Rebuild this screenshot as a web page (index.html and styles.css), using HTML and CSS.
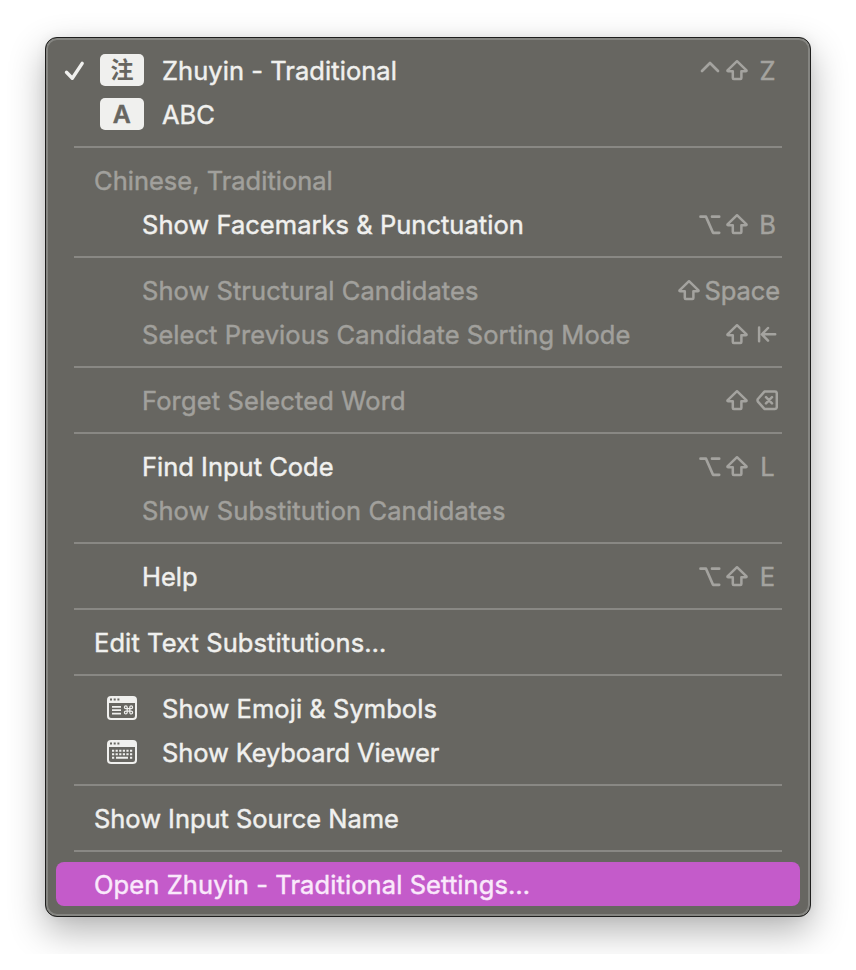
FILE: index.html
```html
<!DOCTYPE html>
<html lang="en">
<head>
<meta charset="utf-8">
<title>Input menu</title>
<link rel="stylesheet" href="styles.css">
</head>
<body>
<svg class="defs" width="0" height="0">
  <symbol id="shift" viewBox="0 0 22 22"><path d="M11 2.2 1.5 11.4Q1.2 12.3 2.2 12.3H6.8V19Q6.8 20 7.8 20H14.4Q15.4 20 15.4 19V12.3H19.8Q20.8 12.3 20.5 11.4Z"/></symbol>
  <symbol id="option" viewBox="0 0 22 22"><path d="M1.5 3.7H7L14 19.8H20.2M13 3.7H20.2"/></symbol>
  <symbol id="control" viewBox="0 0 22 22"><path d="M3 12 11 4 19 12"/></symbol>
  <symbol id="backtab" viewBox="0 0 22 22"><path d="M3.1 4.4V18.2M19.2 11.3H6.5M12 5 5.9 11.3 12 17.7"/></symbol>
  <symbol id="delete" viewBox="0 0 22 22"><path d="M8.4 2.6H19Q20.8 2.6 20.8 4.6V17.9Q20.8 19.9 19 19.9H8.4L1.9 12.6Q1.1 11.3 1.9 10ZM10 8.2 16 14.4M16 8.2 10 14.4"/></symbol>
</svg>
<nav class="menu">
  <div class="item source">
    <svg class="check" viewBox="0 0 22 22"><path d="M2.5 13.2 8.3 19.2 18.2 4.4"/></svg>
    <span class="badge cjk">注</span><span class="label wide-s">Zhuyin - Traditional</span>
    <span class="keys"><svg class="key ctl"><use href="#control"/></svg><svg class="key"><use href="#shift"/></svg><span class="letter">Z</span></span>
  </div>
  <div class="item source"><span class="badge"><span class="glyph">A</span></span><span class="label">ABC</span></div>
  <hr>
  <div class="item off"><span class="label">Chinese, Traditional</span></div>
  <div class="item sub"><span class="label wide-xs">Show Facemarks &amp; Punctuation</span><span class="keys"><svg class="key opt"><use href="#option"/></svg><svg class="key"><use href="#shift"/></svg><span class="letter">B</span></span></div>
  <hr>
  <div class="item sub off"><span class="label wide-s">Show Structural Candidates</span><span class="keys"><svg class="key"><use href="#shift"/></svg><span class="word">Space</span></span></div>
  <div class="item sub off"><span class="label wide-s">Select Previous Candidate Sorting Mode</span><span class="keys"><svg class="key"><use href="#shift"/></svg><svg class="key last"><use href="#backtab"/></svg></span></div>
  <hr>
  <div class="item sub off"><span class="label wide-l">Forget Selected Word</span><span class="keys"><svg class="key"><use href="#shift"/></svg><svg class="key last"><use href="#delete"/></svg></span></div>
  <hr>
  <div class="item sub"><span class="label">Find Input Code</span><span class="keys"><svg class="key opt"><use href="#option"/></svg><svg class="key"><use href="#shift"/></svg><span class="letter">L</span></span></div>
  <div class="item sub off"><span class="label wide">Show Substitution Candidates</span></div>
  <hr>
  <div class="item sub"><span class="label">Help</span><span class="keys"><svg class="key opt"><use href="#option"/></svg><svg class="key"><use href="#shift"/></svg><span class="letter">E</span></span></div>
  <hr>
  <div class="item"><span class="label wide">Edit Text Substitutions…</span></div>
  <hr>
  <div class="item source">
    <svg class="window" viewBox="0 0 30 24"><path class="solid" fill-rule="evenodd" d="M4 0H26Q30 0 30 4V20Q30 24 26 24H4Q0 24 0 20V4Q0 0 4 0ZM2 7V20Q2 22 4 22H26Q28 22 28 20V7Z"/><path class="dots" d="M3 3.5H5M6.7 3.5H8.7M10.4 3.5H12.4"/><path class="lines thin" d="M5 10.8H14M5 14.2H14M5 17.6H14"/><path class="command" d="M20.2 12.6V11.2A1.4 1.4 0 1 0 18.8 12.6H24.2A1.4 1.4 0 1 0 22.8 11.2V16.6A1.4 1.4 0 1 0 24.2 15.2H18.8A1.4 1.4 0 1 0 20.2 16.6Z"/></svg>
    <span class="label wide-s">Show Emoji &amp; Symbols</span>
  </div>
  <div class="item source">
    <svg class="window" viewBox="0 0 30 24"><path class="solid" fill-rule="evenodd" d="M4 0H26Q30 0 30 4V20Q30 24 26 24H4Q0 24 0 20V4Q0 0 4 0ZM2 7V20Q2 22 4 22H26Q28 22 28 20V7Z"/><path class="dots" d="M3 3.5H5M6.7 3.5H8.7M10.4 3.5H12.4"/><path class="keyrows" d="M5 10.8H25.2M5 14.2H25.2"/><path class="lines" d="M5 17.7H7.2M9 17.7H21M23 17.7H25.2"/></svg>
    <span class="label tight">Show Keyboard Viewer</span>
  </div>
  <hr>
  <div class="item"><span class="label tight-s">Show Input Source Name</span></div>
  <hr>
  <div class="item selected"><span class="label wide">Open Zhuyin - Traditional Settings…</span></div>
</nav>
</body>
</html>
```
FILE: styles.css
```css
* { box-sizing: border-box; }
body { margin: 0; padding: 37px 45px; background: #fff; overflow: hidden; font-family: Inter, "Noto Sans CJK TC", sans-serif; }
.defs { position: absolute; }
.menu {
  width: 766px; height: 880px; padding: 10px 10px 7px; color: #f0f0ee;
  background: #676661; border: 1px solid #1e1e1d; border-radius: 12px;
  box-shadow: inset 0 0 0 2px #858581, 0 14px 36px rgba(0,0,0,.3), 0 0 12px rgba(0,0,0,.05);
}
.item { height: 44px; padding: 2px 19px 0 38px; display: flex; align-items: center; border-radius: 8px; font-size: 25.5px; line-height: 42px; white-space: nowrap; -webkit-text-stroke: .45px currentColor; }
.sub { padding-left: 86px; }
.off { color: #a1a09c; }
.selected { background: #c45bca; color: #fae9fb; }
hr { height: 2px; margin: 10px 18px; border: 0; background: #898884; }
.source { padding-left: 8px; }
.wide-xs { letter-spacing: .03px; }
.wide-s { letter-spacing: .05px; }
.wide { letter-spacing: .09px; }
.wide-l { letter-spacing: .14px; }
.tight { letter-spacing: -.12px; }
.tight-s { letter-spacing: -.04px; }
.check { width: 22px; height: 22px; margin: -2px 14px 0 0; fill: none; stroke: #f0f0ee; stroke-width: 3.4; stroke-linecap: round; stroke-linejoin: round; }
.badge { width: 44px; height: 32px; border-radius: 5px; margin: -2px 18px 0 36px; background: #f0f0ee; color: #676661; font-size: 24px; font-weight: 600; line-height: 34px; text-align: center; }
.check + .badge { margin-left: 0; }
.glyph { display: inline-block; transform: scaleX(1.03); }
.cjk { font-family: "Noto Sans CJK TC", sans-serif; font-size: 23px; font-weight: 700; line-height: 29px; -webkit-text-stroke: 0; }
.window { width: 30px; height: 24px; margin: -2px 25px 0 43px; fill: none; }
.solid { fill: #f0f0ee; }
.dots { stroke: #676661; stroke-width: 2; }
.lines { stroke: #f0f0ee; stroke-width: 2; }
.thin { stroke-width: 1.7; }
.keyrows { stroke: #f0f0ee; stroke-width: 2; stroke-dasharray: 2.2 1.4; }
.command { stroke: #f0f0ee; stroke-width: 1.2; }
.keys { margin-left: auto; display: flex; align-items: center; color: #a4a39f; }
.key { width: 22px; height: 22px; margin-top: -2px; fill: none; stroke: #a4a39f; stroke-width: 2.5; stroke-linecap: round; stroke-linejoin: round; }
.ctl, .opt { margin-right: 5px; stroke-width: 2.7; }
.last { margin: -2px 3px 0 8px; }
.letter { width: 33px; padding-left: 6px; text-align: center; }
.word { margin: 0 1px 0 5px; letter-spacing: -.1px; }
```
